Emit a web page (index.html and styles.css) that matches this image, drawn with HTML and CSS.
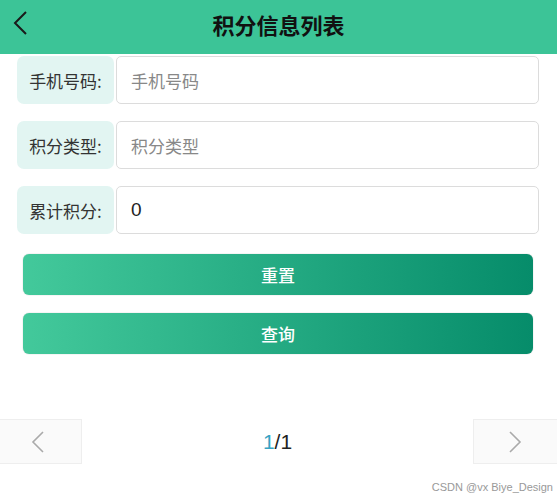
FILE: index.html
```html
<!DOCTYPE html>
<html>
  <head>
    <meta charset="UTF-8" />
    <title>积分信息列表</title>
    <link rel="stylesheet" href="styles.css">
  </head>
  <body>
    <div class="header">
      <span class="back">
        <svg width="16" height="26" viewBox="0 0 16 26"><path d="M14 2 L3 13 L14 24" fill="none" stroke="#1a1a1a" stroke-width="2"/></svg>
      </span>
      <div class="title">积分信息列表</div>
    </div>

    <div class="form">
      <div class="row">
        <div class="row-label">手机号码:</div>
        <div class="row-field placeholder">手机号码</div>
      </div>
      <div class="row">
        <div class="row-label">积分类型:</div>
        <div class="row-field placeholder">积分类型</div>
      </div>
      <div class="row">
        <div class="row-label">累计积分:</div>
        <div class="row-field">0</div>
      </div>
    </div>

    <div class="actions">
      <button class="btn">重置</button>
      <button class="btn">查询</button>
    </div>

    <div class="pager">
      <div class="pager-btn prev">
        <svg width="14" height="24" viewBox="0 0 14 24"><path d="M12 2 L2 12 L12 22" fill="none" stroke="#aaa" stroke-width="1.6"/></svg>
      </div>
      <div class="pager-num"><span class="current">1</span>/1</div>
      <div class="pager-btn next">
        <svg width="14" height="24" viewBox="0 0 14 24"><path d="M2 2 L12 12 L2 22" fill="none" stroke="#aaa" stroke-width="1.6"/></svg>
      </div>
    </div>

    <div class="watermark">CSDN @vx Biye_Design</div>
  </body>
</html>
```

FILE: styles.css
```css
body {
  margin: 0;
  font-family: "Noto Sans CJK SC", "Noto Sans", sans-serif;
  background-color: #fff;
  color: #333;
  position: relative;
  height: 498px;
  overflow: hidden;
}

.header {
  height: 54px;
  background-color: #3cc497;
  display: flex;
  align-items: center;
  justify-content: center;
  position: relative;
}

.back {
  position: absolute;
  left: 12px;
  top: 10px;
}

.title {
  font-size: 22px;
  font-weight: 700;
  color: #111;
  margin-top: -6px;
}

.form {
  padding: 2px 18px 0 17px;
  display: flex;
  flex-direction: column;
  gap: 17px;
}

.row {
  display: flex;
  height: 48px;
  gap: 2px;
}

.row-label {
  width: 97px;
  background-color: #e2f5f2;
  border-radius: 7px;
  display: flex;
  align-items: center;
  justify-content: center;
  font-size: 17px;
  color: #333;
}

.row-field {
  flex: 1;
  border: 1px solid #dcdcdc;
  border-radius: 5px;
  display: flex;
  align-items: center;
  padding-left: 14px;
  font-size: 19px;
  color: #222;
  font-family: "Liberation Sans", "Noto Sans CJK SC", sans-serif;
}

.row-field.placeholder {
  color: #888;
  font-size: 17px;
  font-family: "Noto Sans CJK SC", sans-serif;
}

.actions {
  margin: 20px 24px 0 23px;
  display: flex;
  flex-direction: column;
  gap: 18px;
}

.btn {
  height: 41px;
  border: none;
  border-radius: 6px;
  background: linear-gradient(90deg, #43c99b, #068c6a);
  box-shadow: 0 0 1px rgba(0, 0, 0, 0.4);
  color: #fff;
  font-size: 17px;
  font-weight: 500;
  font-family: "Noto Sans CJK SC", sans-serif;
}

.pager {
  position: absolute;
  left: 0;
  right: 0;
  top: 419px;
  height: 45px;
  display: flex;
  align-items: center;
  justify-content: space-between;
}

.pager-btn {
  height: 45px;
  box-sizing: border-box;
  background-color: #fafafa;
  border: 1px solid #eee;
  display: flex;
  align-items: center;
  justify-content: center;
}

.pager-btn.prev {
  width: 82px;
  border-left: none;
  padding-right: 5px;
}

.pager-btn.next {
  width: 84px;
  border-right: none;
  padding-right: 1px;
}

.pager-num {
  font-size: 21px;
  color: #222;
  font-family: "Liberation Sans", sans-serif;
}

.pager-num .current {
  color: #36a3c3;
}

.watermark {
  position: absolute;
  right: 4px;
  bottom: 5px;
  font-size: 11px;
  color: #999;
  font-family: "Liberation Sans", sans-serif;
}
```
